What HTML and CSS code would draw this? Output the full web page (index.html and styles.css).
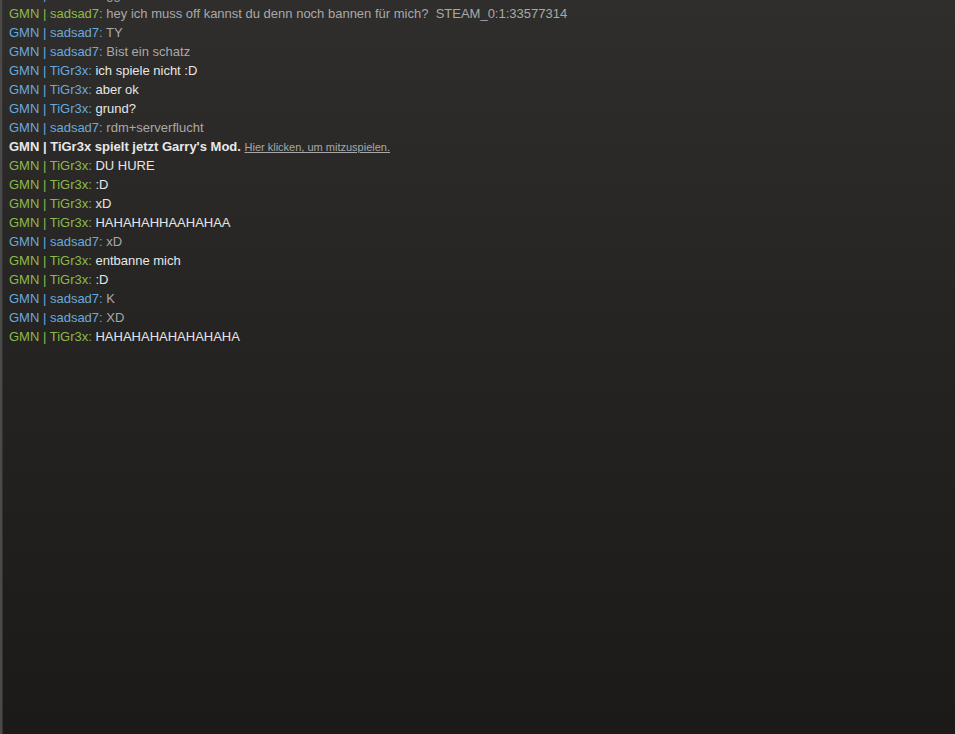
FILE: index.html
```html
<!DOCTYPE html>
<html>
<head>
<meta charset="utf-8">
<link rel="stylesheet" href="styles.css">
</head>
<body>
<div class="chat">
  <div class="log">
    <div class="row"><span class="name blue">GMN | sadsad7:</span> <span class="msg dim">gg</span></div>
    <div class="row"><span class="name green">GMN | sadsad7:</span> <span class="msg dim">hey ich muss off kannst du denn noch bannen für mich?&nbsp; STEAM_0:1:33577314</span></div>
    <div class="row"><span class="name blue">GMN | sadsad7:</span> <span class="msg dim">TY</span></div>
    <div class="row"><span class="name blue">GMN | sadsad7:</span> <span class="msg dim">Bist ein schatz</span></div>
    <div class="row"><span class="name blue">GMN | TiGr3x:</span> <span class="msg">ich spiele nicht :D</span></div>
    <div class="row"><span class="name blue">GMN | TiGr3x:</span> <span class="msg">aber ok</span></div>
    <div class="row"><span class="name blue">GMN | TiGr3x:</span> <span class="msg">grund?</span></div>
    <div class="row"><span class="name blue">GMN | sadsad7:</span> <span class="msg dim">rdm+serverflucht</span></div>
    <div class="row"><span class="event">GMN | TiGr3x spielt jetzt Garry's Mod.</span> <a class="join" href="#">Hier klicken, um mitzuspielen.</a></div>
    <div class="row"><span class="name green">GMN | TiGr3x:</span> <span class="msg">DU HURE</span></div>
    <div class="row"><span class="name green">GMN | TiGr3x:</span> <span class="msg">:D</span></div>
    <div class="row"><span class="name green">GMN | TiGr3x:</span> <span class="msg">xD</span></div>
    <div class="row"><span class="name green">GMN | TiGr3x:</span> <span class="msg">HAHAHAHHAAHAHAA</span></div>
    <div class="row"><span class="name blue">GMN | sadsad7:</span> <span class="msg dim">xD</span></div>
    <div class="row"><span class="name green">GMN | TiGr3x:</span> <span class="msg">entbanne mich</span></div>
    <div class="row"><span class="name green">GMN | TiGr3x:</span> <span class="msg">:D</span></div>
    <div class="row"><span class="name blue">GMN | sadsad7:</span> <span class="msg dim">K</span></div>
    <div class="row"><span class="name blue">GMN | sadsad7:</span> <span class="msg dim">XD</span></div>
    <div class="row"><span class="name green">GMN | TiGr3x:</span> <span class="msg">HAHAHAHAHAHAHAHA</span></div>
  </div>
</div>
</body>
</html>
```
FILE: styles.css
```css
html, body {
  margin: 0;
  padding: 0;
  background: #1b1a19;
}
.chat {
  width: 955px;
  height: 734px;
  box-sizing: border-box;
  overflow: hidden;
  background: linear-gradient(to bottom, #2f2e2c 0%, #252423 45%, #1b1a19 100%);
  border-left: 2px solid #4a4a4a;
  box-shadow: inset 1px 0 0 #333231;
  padding-left: 7px;
  font-family: "Liberation Sans", Arial, sans-serif;
  font-size: 13px;
}
.log {
  margin-top: -15px;
}
.row {
  height: 19px;
  line-height: 19px;
  white-space: nowrap;
}
.name.blue { color: #6aa9dc; }
.name.green { color: #8db94a; }
.msg { color: #e6e6e6; }
.msg.dim { color: #a9a9a7; }
.event {
  font-weight: bold;
  color: #e8e8e8;
}
.join {
  font-size: 11px;
  color: #a8a8a8;
  text-decoration: underline;
}
```
